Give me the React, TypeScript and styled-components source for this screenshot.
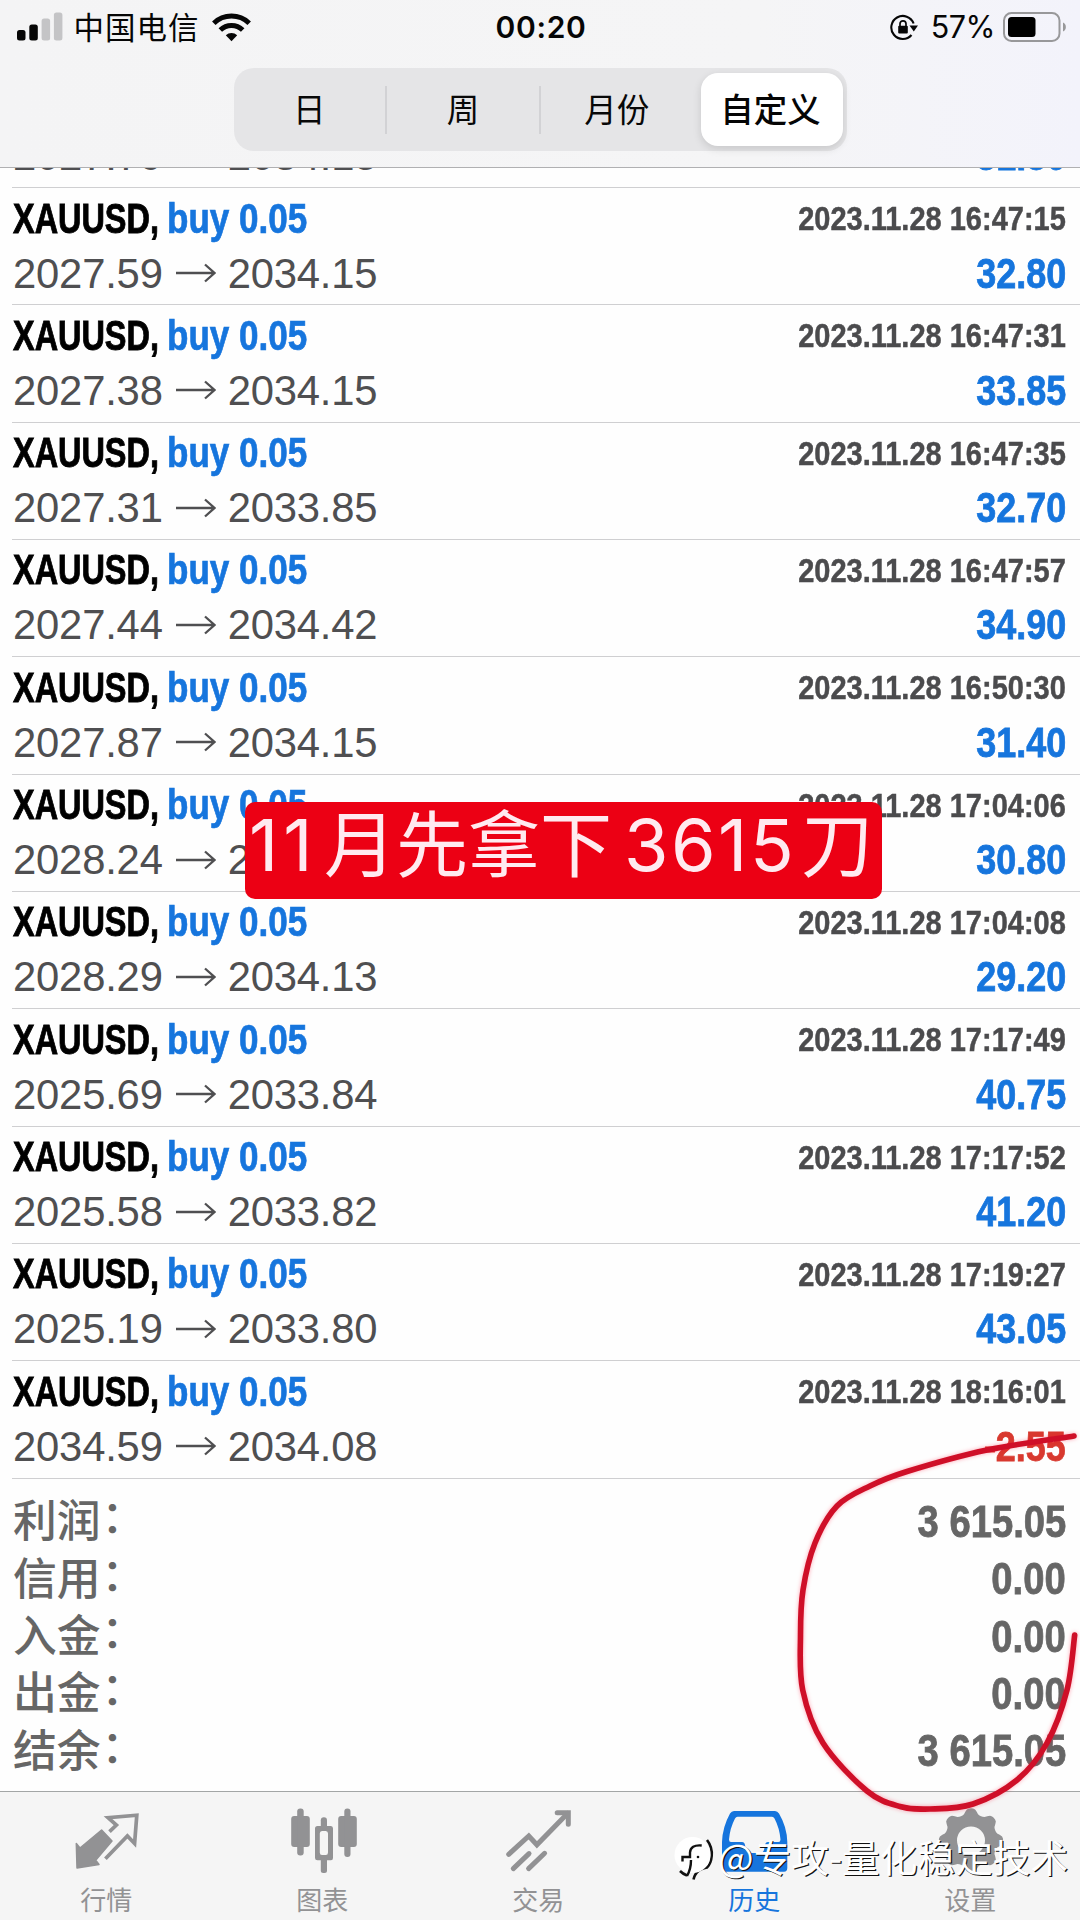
import React from "react";
import styled, { createGlobalStyle } from "styled-components";

const GlobalStyle = createGlobalStyle`
  body { margin: 0; background: #fff; }
  * { box-sizing: border-box; }
`;

const LATIN = `"Liberation Sans", "Noto Sans CJK SC", sans-serif`;
const CJK = `"Noto Sans CJK SC", sans-serif`;
const UI = `Inter, "Noto Sans CJK SC", sans-serif`;

const Screen = styled.div`
  position: relative;
  width: 1080px;
  height: 1920px;
  display: flex;
  flex-direction: column;
  overflow: hidden;
  background: #fefefe;
`;

const Header = styled.header`
  height: 168px;
  flex: none;
  border-bottom: 1px solid #b0b0b2;
  background: linear-gradient(90deg, #f4f4f5 0%, #f5f5f6 70%, #f3f3fb 100%);
`;

const StatusBar = styled.div`
  height: 68px;
  padding: 0 13px 15px 17px;
  display: grid;
  grid-template-columns: 1fr auto 1fr;
  align-items: center;
  color: #060606;
`;

const StatusGroup = styled.div<{ $end?: boolean }>`
  display: flex;
  align-items: center;
  justify-content: ${(p) => (p.$end ? "flex-end" : "flex-start")};
`;

const Carrier = styled.span`
  font: 400 30.5px/38px ${CJK};
  letter-spacing: 1px;
  margin: -2px 12px 0 10.5px;
`;

const Clock = styled.span`
  font: 600 30px/38px ${UI};
  letter-spacing: 0.7px;
  margin-right: 2px;
`;

const Percent = styled.span`
  font: 400 30.5px/38px ${UI};
  letter-spacing: -0.5px;
  margin: 0 8px 0 13px;
`;

const Segments = styled.div`
  width: 613px;
  height: 83px;
  margin: 0 auto;
  padding: 5px 4px 5px 0;
  display: flex;
  align-items: center;
  border-radius: 20px;
  background: #e5e5e7;
`;

const Segment = styled.div<{ $line?: boolean }>`
  width: 153.7px;
  height: 48px;
  border-right: 2px solid ${(p) => (p.$line ? "#d2d2d5" : "transparent")};
  display: flex;
  align-items: center;
  justify-content: center;
  font: 400 32.5px/46px ${CJK};
  padding-bottom: 3px;
  color: #080808;
`;

const ActiveSegment = styled.div`
  width: 142px;
  height: 73px;
  margin-left: auto;
  border-radius: 17px;
  background: #fff;
  box-shadow: 0 3px 9px rgba(0, 0, 0, 0.13);
  text-align: center;
  font: 500 33.5px/70px ${CJK};
  text-indent: -2px;
  color: #050505;
`;

const History = styled.main`
  flex: none;
`;

const Row = styled.article`
  height: 117.333px;
  margin-left: 12px;
  padding: 2.5px 14px 0 1px;
  border-bottom: 1px solid #cfcfd1;
`;

const ClippedRow = styled.article`
  height: 20px;
  margin-left: 12px;
  padding: 0 14px 4px 1px;
  border-bottom: 1px solid #cfcfd1;
  display: flex;
  flex-direction: column;
  justify-content: flex-end;
  overflow: hidden;
`;

const Line = styled.div`
  height: 55px;
  flex: none;
  display: flex;
  align-items: center;
  justify-content: space-between;
`;

const Title = styled.div`
  display: flex;
  font: 700 42px/55px ${LATIN};
  white-space: nowrap;
`;

const SymbolName = styled.span`
  width: 153.5px;
  color: #000;
  transform: scaleX(0.772);
  transform-origin: 0 50%;
  -webkit-text-stroke: 0.9px #000;
`;

const Side = styled.span`
  color: #1675dd;
  transform: scaleX(0.835);
  transform-origin: 0 50%;
  -webkit-text-stroke: 0.7px #1675dd;
`;

const Stamp = styled.span`
  font: 700 34px/54px ${LATIN};
  color: #4b4b4d;
  white-space: nowrap;
  transform: scaleX(0.853);
  transform-origin: 100% 50%;
  -webkit-text-stroke: 0.5px #4b4b4d;
`;

const Prices = styled.div`
  display: flex;
  align-items: center;
  font: 400 41.8px/55px ${LATIN};
  letter-spacing: -0.2px;
  color: #4f4f51;
`;

const Profit = styled.span<{ $loss?: boolean }>`
  font: 700 42px/55px ${LATIN};
  color: ${(p) => (p.$loss ? "#d8392f" : "#1675dd")};
  transform: scaleX(0.855);
  transform-origin: 100% 50%;
  -webkit-text-stroke: 0.8px currentColor;
`;

const ArrowSvg = styled.svg`
  width: 40px;
  height: 20px;
  margin: 0 12px 0 13px;
`;

const Summary = styled.section`
  padding: 14px 14px 0 13px;
  flex: 1;
`;

const SummaryRow = styled.div`
  height: 57.4px;
  display: flex;
  align-items: center;
  justify-content: space-between;
  color: #666;
`;

const SummaryLabel = styled.span`
  display: flex;
  font: 500 43.8px/57px ${CJK};
  padding-bottom: 5px;
`;

const Colon = styled.span`
  transform: translate(1px, -4.5px);
`;

const SummaryValue = styled.span`
  font: 700 44px/57px ${LATIN};
  transform: scaleX(0.868);
  transform-origin: 100% 50%;
  -webkit-text-stroke: 0.8px #666;
`;

const TabBar = styled.nav`
  height: 129px;
  flex: none;
  display: grid;
  grid-template-columns: repeat(5, 1fr);
  border-top: 1px solid #a3a6a6;
  background: #f5f5f5;
`;

const Tab = styled.div<{ $active?: boolean }>`
  display: flex;
  flex-direction: column;
  align-items: center;
  padding-top: 12px;
  color: ${(p) => (p.$active ? "#1675dd" : "#929294")};
`;

const TabIcon = styled.svg`
  width: 68px;
  height: 72px;
`;

const TabLabel = styled.span`
  font: 400 26px/36px ${CJK};
  margin: 5px 3.5px 0 0;
`;

const Banner = styled.div`
  position: absolute;
  left: 245px;
  top: 802px;
  width: 637px;
  height: 97px;
  border-radius: 10px;
  background: #ec0014;
  color: #ffeaf0;
  display: flex;
  align-items: center;
  padding: 0 0 12px 4px;
  font: 400 72px/86px ${UI};
  white-space: nowrap;
`;

const BannerDigits = styled.span<{ $gap: number; $width: number }>`
  width: ${(p) => p.$width}px;
  letter-spacing: ${(p) => p.$gap}px;
`;

const BannerHan = styled.span<{ $width: number }>`
  width: ${(p) => p.$width}px;
`;

const Scribble = styled.svg`
  position: absolute;
  left: 780px;
  top: 1420px;
  width: 300px;
  height: 410px;
  filter: drop-shadow(0 0 2px rgba(255, 0, 40, 0.35));
`;

const Watermark = styled.div`
  position: absolute;
  left: 673px;
  top: 1831px;
  height: 50px;
  display: flex;
  align-items: center;
  gap: 4px;
  color: #fff;
  font: 400 37.7px/50px ${CJK};
  text-shadow: 1.2px 1.2px 0 #111;
  white-space: nowrap;
`;

const trades = [
  ["2027.59", "2034.15", "2023.11.28 16:47:15", "32.80"],
  ["2027.38", "2034.15", "2023.11.28 16:47:31", "33.85"],
  ["2027.31", "2033.85", "2023.11.28 16:47:35", "32.70"],
  ["2027.44", "2034.42", "2023.11.28 16:47:57", "34.90"],
  ["2027.87", "2034.15", "2023.11.28 16:50:30", "31.40"],
  ["2028.24", "2034.15", "2023.11.28 17:04:06", "30.80"],
  ["2028.29", "2034.13", "2023.11.28 17:04:08", "29.20"],
  ["2025.69", "2033.84", "2023.11.28 17:17:49", "40.75"],
  ["2025.58", "2033.82", "2023.11.28 17:17:52", "41.20"],
  ["2025.19", "2033.80", "2023.11.28 17:19:27", "43.05"],
  ["2034.59", "2034.08", "2023.11.28 18:16:01", "-2.55"],
];

const totals = [
  ["利润", "3 615.05"],
  ["信用", "0.00"],
  ["入金", "0.00"],
  ["出金", "0.00"],
  ["结余", "3 615.05"],
];

// Catmull-Rom spline through the hand-drawn points
function spline(p: number[][]) {
  let d = `M${p[0][0]} ${p[0][1]}`;
  for (let i = 0; i < p.length - 1; i++) {
    const a = p[i - 1] || p[i];
    const b = p[i];
    const c = p[i + 1];
    const e = p[i + 2] || c;
    d += `C${b[0] + (c[0] - a[0]) / 6} ${b[1] + (c[1] - a[1]) / 6} ${c[0] - (e[0] - b[0]) / 6} ${c[1] - (e[1] - b[1]) / 6} ${c[0]} ${c[1]}`;
  }
  return d;
}

const scribblePoints = [
  [294, 16], [207, 30], [127, 51.5], [90, 66], [57, 86], [35, 123], [23, 170], [20.5, 215],
  [22.7, 270], [43, 323], [87, 371], [120, 386.5], [150, 389], [193, 384], [237, 360],
  [267, 323], [287, 270], [294.7, 215],
];

// Eight-toothed cog outline around (33, 36.5)
function cog() {
  const pts: number[][] = [];
  for (let i = 0; i < 96; i++) {
    const t = (i / 96) * Math.PI * 2;
    const r = 29.2 + 3.2 * Math.tanh(1.6 * Math.cos(8 * t));
    pts.push([33 + r * Math.sin(t), 36.5 - r * Math.cos(t)]);
  }
  return "M" + pts.map((q) => q.map((v) => v.toFixed(2)).join(" ")).join("L") + "Z";
}

const Arrow = () => (
  <ArrowSvg viewBox="0 0 40 20" fill="none" stroke="currentColor" strokeWidth="2.3">
    <path d="M0 10H38M29 1.5L38.5 10L29 18.5" />
  </ArrowSvg>
);

const SignalIcon = () => (
  <svg width="46" height="30" viewBox="0 0 46 30">
    <rect x="0" y="18" width="8.5" height="10.5" rx="2.5" fill="#060606" />
    <rect x="12.3" y="12.5" width="8.5" height="16" rx="2.5" fill="#060606" />
    <rect x="24.6" y="6.5" width="8.5" height="22" rx="2.5" fill="#c4c4c6" />
    <rect x="36.9" y="0.5" width="8.5" height="28" rx="2.5" fill="#c4c4c6" />
  </svg>
);

const WifiIcon = () => (
  <svg width="39" height="30" viewBox="0 0 39 30" fill="none" stroke="#060606" strokeWidth="5">
    <path d="M1.8 11.2A25.5 25.5 0 0 1 37.2 11.2" />
    <path d="M8.3 18A16 16 0 0 1 30.7 18" />
    <path d="M13.8 23.3A8.3 8.3 0 0 1 25.2 23.3L19.5 29.2Z" fill="#060606" stroke="none" />
  </svg>
);

const LockIcon = () => (
  <svg width="28" height="28" viewBox="0 0 28 28" fill="none" stroke="#060606">
    <path d="M21.5 22A11.5 11.5 0 1 1 23.6 10.5" strokeWidth="2.1" />
    <path d="M19.5 12.5H28L23.8 18.4Z" fill="#060606" stroke="none" />
    <rect x="8.2" y="12.8" width="9.6" height="7.6" rx="1" fill="#060606" stroke="none" />
    <path d="M10 13V10.8A3 3 0 0 1 16 10.8V13" strokeWidth="1.7" />
  </svg>
);

const BatteryIcon = () => (
  <svg width="64" height="30" viewBox="0 0 64 30">
    <rect x="1" y="1" width="55.5" height="28" rx="7.5" fill="none" stroke="#98989a" strokeWidth="2" />
    <rect x="5" y="5" width="27.5" height="20" rx="3.5" fill="#000" />
    <path d="M60 10.5C63.8 12 63.8 18 60 19.5Z" fill="#98989a" />
  </svg>
);

const QuotesIcon = () => (
  <TabIcon viewBox="0 0 68 72">
    <path d="M27.6 26L38 37L21.7 56.3L25 60.5L3 64L2.3 39.5L6 44Z" fill="currentColor" stroke="currentColor" strokeWidth="1.5" strokeLinejoin="round" />
    <path d="M35.5 27.7L42.4 21L34.1 13.7L62.8 11.2L60.6 39.5L53.4 32L31.4 54.7" fill="none" stroke="currentColor" strokeWidth="3.7" />
  </TabIcon>
);

const ChartIcon = () => (
  <TabIcon viewBox="0 0 68 72" fill="currentColor">
    <rect x="1.2" y="12" width="18.6" height="31" rx="3" />
    <rect x="7.2" y="4.6" width="6.5" height="47" rx="3" />
    <path fillRule="evenodd" d="M27.5 22H41Q43 22 43 24.5V54Q43 56.3 41 56.3H27.5Q25 56.3 25 54V24.5Q25 22 27.5 22ZM32 27Q29.8 27 29.8 29.5V48.5Q29.8 51 32 51H35.8Q38 51 38 48.5V29.5Q38 27 35.8 27Z" />
    <rect x="30.8" y="13.3" width="6.2" height="12" rx="3" />
    <rect x="30.8" y="53" width="6.2" height="16" rx="2.5" />
    <rect x="48.2" y="12" width="18.6" height="31" rx="3" />
    <rect x="54.3" y="4.6" width="6.2" height="48.5" rx="3" />
  </TabIcon>
);

const TradeIcon = () => (
  <TabIcon viewBox="0 0 68 72" fill="none" stroke="currentColor" strokeWidth="5" strokeLinecap="round">
    <path d="M2.7 50.3L22.8 32L30.9 40.8L61.5 9.5" />
    <path d="M51.2 8.7H62.3V20.3M7.3 64.6L23 49.6M22.6 64.6L38.6 49.3" />
  </TabIcon>
);

const HistoryIcon = () => (
  <TabIcon viewBox="0 0 68 72">
    <path fillRule="evenodd" fill="currentColor" d="M12 7H53Q55.5 7 57 9.5Q65 23 65.3 38V64Q65.3 67.7 62 67.7H3.5Q0 67.7 0 64V38Q.5 23 8 9.5Q9.5 7 12 7ZM15.5 12.7Q14 12.7 13 14.5Q8 24 7 35.5Q7 38 9 38H20Q22.5 38 23 41L24 46Q25 49 28 49H38Q41 49 42 46L43 41Q43.5 38 46 38H56.5Q58.5 38 58.5 35.5Q57.5 24 52.5 14.5Q51.5 12.7 50 12.7Z" />
  </TabIcon>
);

const SettingsIcon = () => (
  <TabIcon viewBox="0 0 68 72">
    <path fillRule="evenodd" fill="currentColor" d={cog() + "M33 22.5A14 14 0 1 0 33 50.5A14 14 0 1 0 33 22.5Z"} />
  </TabIcon>
);

const WatermarkLogo = () => (
  <svg width="41" height="52" viewBox="0 0 41 52">
    <path d="M34 10Q39.5 17 38.7 26Q38 34 34 37.5Q30 38 26 40.5Q21.5 44 20.5 49.5" fill="none" stroke="#111" strokeWidth="2.6" />
    <path d="M7 41Q10 44 14 45.5" fill="none" stroke="#111" strokeWidth="2.6" />
    <circle cx="19.5" cy="25" r="18" fill="#fff" />
    <path d="M28.7 15.5Q17.5 14.5 17 22.5V27H9.5V31.5M18 30Q18 39 14 46" fill="none" stroke="#111" strokeWidth="2.4" />
    <circle cx="25" cy="27" r="1.3" fill="#111" />
  </svg>
);

const tabs = [
  { label: "行情", Icon: QuotesIcon },
  { label: "图表", Icon: ChartIcon },
  { label: "交易", Icon: TradeIcon },
  { label: "历史", Icon: HistoryIcon, active: true },
  { label: "设置", Icon: SettingsIcon },
];

export default function App() {
  return (
    <Screen>
      <GlobalStyle />
      <Header>
        <StatusBar>
          <StatusGroup>
            <SignalIcon />
            <Carrier>中国电信</Carrier>
            <WifiIcon />
          </StatusGroup>
          <Clock>00:20</Clock>
          <StatusGroup $end>
            <LockIcon />
            <Percent>57%</Percent>
            <BatteryIcon />
          </StatusGroup>
        </StatusBar>
        <Segments>
          <Segment $line>日</Segment>
          <Segment $line>周</Segment>
          <Segment>月份</Segment>
          <ActiveSegment>自定义</ActiveSegment>
        </Segments>
      </Header>
      <History>
        <ClippedRow>
          <Line>
            <Prices>
              2027.79
              <Arrow />
              2034.15
            </Prices>
            <Profit>31.80</Profit>
          </Line>
        </ClippedRow>
        {trades.map(([open, close, time, profit]) => (
          <Row key={time}>
            <Line>
              <Title>
                <SymbolName>XAUUSD,</SymbolName>
                <Side>buy 0.05</Side>
              </Title>
              <Stamp>{time}</Stamp>
            </Line>
            <Line>
              <Prices>
                {open}
                <Arrow />
                {close}
              </Prices>
              <Profit $loss={profit.startsWith("-")}>{profit}</Profit>
            </Line>
          </Row>
        ))}
      </History>
      <Summary>
        {totals.map(([label, value]) => (
          <SummaryRow key={label}>
            <SummaryLabel>
              {label}
              <Colon>：</Colon>
            </SummaryLabel>
            <SummaryValue>{value}</SummaryValue>
          </SummaryRow>
        ))}
      </Summary>
      <TabBar>
        {tabs.map(({ label, Icon, active }) => (
          <Tab key={label} $active={active}>
            <Icon />
            <TabLabel>{label}</TabLabel>
          </Tab>
        ))}
      </TabBar>
      <Banner>
        <BannerDigits $gap={5} $width={75}>11</BannerDigits>
        <BannerHan $width={300}>月先拿下</BannerHan>
        <BannerDigits $gap={2.5} $width={177}>3615</BannerDigits>
        <BannerHan $width={72}>刀</BannerHan>
      </Banner>
      <Scribble viewBox="0 0 300 410" fill="none" stroke="#cf0f28" strokeWidth="5.6" strokeLinecap="round">
        <path d={spline(scribblePoints)} />
      </Scribble>
      <Watermark>
        <WatermarkLogo />
        <span>@专攻-量化稳定技术</span>
      </Watermark>
    </Screen>
  );
}
